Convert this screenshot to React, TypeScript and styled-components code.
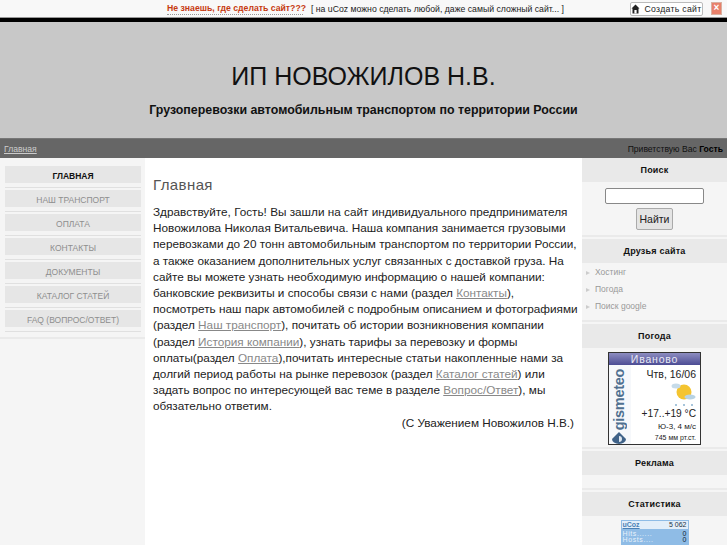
import React from "react";
import styled, { createGlobalStyle } from "styled-components";

const Global = createGlobalStyle`
  html, body { margin: 0; padding: 0; background: #fff; height: 545px; overflow: hidden; }
  body { font-family: "Liberation Sans", Arial, sans-serif; }
`;

const Page = styled.div`
  width: 727px;
  height: 545px;
  overflow: hidden;
  display: flex;
  flex-direction: column;
`;

const TopBar = styled.div`
  height: 17px;
  flex: none;
  background: #f8f8f8;
  display: flex;
  align-items: center;
`;

const TopRule = styled.div`
  height: 5px;
  flex: none;
  background: #000;
  border-top: 1px solid #999;
  box-sizing: border-box;
`;

const Promo = styled.a`
  margin-left: 167px;
  color: #c63a10;
  font-weight: bold;
  font-size: 8.7px;
  border-bottom: 1px dotted #999;
  line-height: 12px;
  width: 136px;
  white-space: nowrap;
`;

const Slogan = styled.span`
  margin-left: 8px;
  color: #222;
  font-size: 8.7px;
  width: 256px;
  white-space: nowrap;
`;

const CreateButton = styled.a`
  margin-left: 63px;
  width: 71px;
  height: 12px;
  background: #fff;
  border: 1px solid #bbb;
  border-radius: 2px;
  display: flex;
  align-items: center;
  justify-content: center;
  gap: 4px;
  color: #222;
  font-size: 8.7px;
  letter-spacing: 0.3px;
`;

const CloseBox = styled.span`
  margin-left: 8px;
  width: 9px;
  height: 11px;
  background: #e8806a;
  border: 1px solid #d9b0a0;
  color: #fff;
  font-size: 10px;
  line-height: 10px;
  text-align: center;
  font-weight: bold;
`;

const Header = styled.header`
  height: 116px;
  flex: none;
  background: #c8c8c8;
  display: flex;
  flex-direction: column;
  align-items: center;
  box-sizing: border-box;
  padding-top: 39px;
  color: #111;
`;

const SiteTitle = styled.h1`
  margin: 0;
  font-size: 25px;
  line-height: 30px;
  font-weight: normal;
`;

const SiteSub = styled.div`
  margin-top: 10px;
  font-size: 12.4px;
  line-height: 18px;
  font-weight: bold;
`;

const NavBar = styled.div`
  height: 20px;
  flex: none;
  background: #666;
  border-top: 1px solid #777;
  box-sizing: border-box;
  padding: 0 4px;
  display: flex;
  align-items: center;
  justify-content: space-between;
  font-size: 8.6px;
`;

const Crumb = styled.a`
  color: #ccc;
  text-decoration: underline;
`;

const Greeting = styled.span`
  color: #111;
  b { color: #000; }
`;

const Columns = styled.div`
  flex: 1;
  display: flex;
  min-height: 0;
`;

const LeftCol = styled.aside`
  width: 145px;
  flex: none;
  background: #f5f5f5;
`;

const MenuBlock = styled.nav`
  padding: 8px 4px 5px 5px;
  display: flex;
  flex-direction: column;
  gap: 2px;
  border-bottom: 2px solid #eaeaea;
`;

const MenuItem = styled.a<{ $active?: boolean }>`
  display: block;
  height: 21px;
  background: linear-gradient(#e6e6e6 0, #e6e6e6 17px, #f4f4f4 17px, #f4f4f4 100%);
  border-bottom: 1px solid #e0e0e0;
  text-align: center;
  font-size: 8.5px;
  line-height: 21px;
  color: ${(p) => (p.$active ? "#111" : "#8e8e8e")};
  font-weight: ${(p) => (p.$active ? "bold" : "normal")};
`;

const Main = styled.main`
  flex: 1;
  min-width: 0;
  background: #fff;
  padding: 17px 8px 0;
  color: #222;
`;

const PageTitle = styled.h2`
  margin: 0 0 9px;
  font-size: 15px;
  line-height: 20px;
  font-weight: normal;
  color: #555;
  letter-spacing: 0.4px;
`;

const Body = styled.div`
  font-size: 11.75px;
  line-height: 16.2px;
  white-space: nowrap;
  a { color: #888; text-decoration: underline; }
`;

const Signature = styled.div`
  text-align: right;
`;

const RightCol = styled.aside`
  width: 145px;
  flex: none;
  background: #f5f5f5;
  display: flex;
  flex-direction: column;
`;

const BlockTitle = styled.div`
  height: 24px;
  flex: none;
  background: #e9e9e9;
  display: flex;
  align-items: center;
  justify-content: center;
  font-size: 9px;
  font-weight: bold;
  color: #111;
  letter-spacing: 0.2px;
`;

const BlockBody = styled.div<{ $h: number }>`
  height: ${(p) => p.$h}px;
  flex: none;
  border-bottom: 2px solid #eaeaea;
  margin-bottom: 2px;
  display: flex;
  flex-direction: column;
  align-items: center;
`;

const SearchInput = styled.input`
  box-sizing: border-box;
  width: 99px;
  height: 16px;
  margin-top: 6px;
  border: 1px solid #888;
  border-radius: 2px;
  background: #fff;
`;

const SearchButton = styled.button`
  width: 37px;
  height: 22px;
  margin-top: 4px;
  padding: 0;
  background: #e4e4e4;
  border: 1px solid #aaa;
  border-radius: 2px;
  font: 10.5px "Liberation Sans", sans-serif;
  color: #222;
`;

const LinkList = styled.ul`
  list-style: none;
  margin: 0;
  padding: 1px 0 0 4px;
  width: 100%;
  box-sizing: border-box;
`;

const LinkRow = styled.li`
  height: 17px;
  font-size: 8.5px;
  line-height: 17px;
  color: #999;
  display: flex;
  align-items: center;
  gap: 5px;
  &::before {
    content: "";
    border-left: 4px solid #ccc;
    border-top: 2px solid transparent;
    border-bottom: 2px solid transparent;
  }
`;

const Informer = styled.div`
  width: 91px;
  height: 91px;
  margin-top: 4px;
  border: 1px solid #333;
  background: #fff;
  display: flex;
  flex-direction: column;
`;

const InformerHead = styled.div`
  height: 12px;
  flex: none;
  background: linear-gradient(#8d8dc0, #4c4c94);
  color: #e8e8f4;
  font-size: 10.5px;
  line-height: 12px;
  text-align: center;
  letter-spacing: 0.8px;
`;

const InformerBody = styled.div`
  flex: 1;
  display: flex;
  min-height: 0;
`;

const Brand = styled.div`
  width: 22px;
  flex: none;
  background: #f6f8fb;
  position: relative;
`;

const BrandMark = styled.svg`
  position: absolute;
  left: 2px;
  bottom: 0;
`;

const BrandText = styled.span`
  position: absolute;
  left: 5px;
  bottom: 14px;
  writing-mode: vertical-rl;
  transform: rotate(180deg);
  font-size: 14.5px;
  font-weight: bold;
  line-height: 11px;
  color: #4f7090;
  letter-spacing: -0.3px;
`;

const Forecast = styled.div`
  flex: 1;
  display: flex;
  flex-direction: column;
  align-items: flex-end;
  padding-right: 4px;
  color: #222;
`;

const FDate = styled.div`
  font-size: 10.5px;
  line-height: 12px;
  margin-top: 3px;
`;

const WeatherIcon = styled.svg`
  display: block;
  margin: 2px 0 0 0;
`;

const Temp = styled.div`
  font-size: 10.2px;
  line-height: 12px;
  white-space: nowrap;
`;

const Wind = styled.div`
  font-size: 8px;
  line-height: 11px;
  margin-top: 1px;
`;

const Pressure = styled.div`
  font-size: 7px;
  line-height: 11px;
`;

const Counter = styled.div`
  width: 68px;
  height: 25px;
  background: #8fbce6;
  margin-top: 4px;
  padding: 1px;
  box-sizing: border-box;
  font-size: 7px;
  line-height: 8px;
  display: flex;
  flex-direction: column;
`;

const CounterTop = styled.div`
  height: 8px;
  background: #e3eef9;
  display: flex;
  justify-content: space-between;
  padding: 0 1px;
  color: #234;
  margin-bottom: 1px;
  u { color: #4a80b5; font-weight: bold; }
`;

const CounterRow = styled.div`
  height: 6px;
  line-height: 7px;
  display: flex;
  justify-content: space-between;
  padding: 0 1px;
  color: #e8f2fb;
  letter-spacing: 0.6px;
  b { color: #123; letter-spacing: 0; font-weight: normal; }
`;

const links = ["Хостинг", "Погода", "Поиск google"];
const menu = ["ГЛАВНАЯ", "НАШ ТРАНСПОРТ", "ОПЛАТА", "КОНТАКТЫ", "ДОКУМЕНТЫ", "КАТАЛОГ СТАТЕЙ", "FAQ (ВОПРОС/ОТВЕТ)"];

export default function App() {
  return (
    <Page>
      <Global />
      <TopBar>
        <Promo>Не знаешь, где сделать сайт???</Promo>
        <Slogan>[ на uCoz можно сделать любой, даже самый сложный сайт... ]</Slogan>
        <CreateButton>
          <svg width="9" height="10" viewBox="0 0 9 10">
            <path d="M4.5 0.5 L8.5 4.5 H7.5 V9.5 H1.5 V4.5 H0.5 Z" fill="#222" />
            <rect x="3.4" y="6" width="2.2" height="3.5" fill="#fff" />
          </svg>
          Создать сайт
        </CreateButton>
        <CloseBox>×</CloseBox>
      </TopBar>
      <TopRule />
      <Header>
        <SiteTitle>ИП НОВОЖИЛОВ Н.В.</SiteTitle>
        <SiteSub>Грузоперевозки автомобильным транспортом по территории России</SiteSub>
      </Header>
      <NavBar>
        <Crumb>Главная</Crumb>
        <Greeting>Приветствую Вас <b>Гость</b></Greeting>
      </NavBar>
      <Columns>
        <LeftCol>
          <MenuBlock>
            {menu.map((m, i) => (
              <MenuItem key={m} $active={i === 0}>{m}</MenuItem>
            ))}
          </MenuBlock>
        </LeftCol>
        <Main>
          <PageTitle>Главная</PageTitle>
          <Body>
            Здравствуйте, Гость! Вы зашли на сайт индивидуального предпринимателя<br />
            Новожилова Николая Витальевича. Наша компания занимается грузовыми<br />
            перевозками до 20 тонн автомобильным транспортом по территории России,<br />
            а также оказанием дополнительных услуг связанных с доставкой груза. На<br />
            сайте вы можете узнать необходимую информацию о нашей компании:<br />
            банковские реквизиты и способы связи с нами (раздел <a>Контакты</a>),<br />
            посмотреть наш парк автомобилей с подробным описанием и фотографиями<br />
            (раздел <a>Наш транспорт</a>), почитать об истории возникновения компании<br />
            (раздел <a>История компании</a>), узнать тарифы за перевозку и формы<br />
            оплаты(раздел <a>Оплата</a>),почитать интересные статьи накопленные нами за<br />
            долгий период работы на рынке перевозок (раздел <a>Каталог статей</a>) или<br />
            задать вопрос по интересующей вас теме в разделе <a>Вопрос/Ответ</a>), мы<br />
            обязательно ответим.
            <Signature>(С Уважением Новожилов Н.В.)</Signature>
          </Body>
        </Main>
        <RightCol>
          <BlockTitle>Поиск</BlockTitle>
          <BlockBody $h={53}>
            <SearchInput />
            <SearchButton>Найти</SearchButton>
          </BlockBody>
          <BlockTitle>Друзья сайта</BlockTitle>
          <BlockBody $h={57}>
            <LinkList>
              {links.map((l) => <LinkRow key={l}>{l}</LinkRow>)}
            </LinkList>
          </BlockBody>
          <BlockTitle>Погода</BlockTitle>
          <BlockBody $h={99}>
            <Informer>
              <InformerHead>Иваново</InformerHead>
              <InformerBody>
                <Brand>
                  <BrandText>gismeteo</BrandText>
                  <BrandMark width="16" height="12" viewBox="0 0 16 12">
                    <path d="M8 0 L15 7 A7 5 0 0 1 1 7 Z" fill="#3f6288" />
                    <path d="M8 4a3 3 0 0 1 0 6z" fill="#dfe7f0" />
                  </BrandMark>
                </Brand>
                <Forecast>
                  <FDate>Чтв, 16/06</FDate>
                  <WeatherIcon width="26" height="26" viewBox="0 0 26 26">
                    <circle cx="14" cy="10" r="7.5" fill="#f4c430" />
                    <ellipse cx="6" cy="4" rx="4.5" ry="2.5" fill="#c6dbe9" />
                    <ellipse cx="20" cy="15" rx="5.5" ry="2.5" fill="#b8d3e4" />
                    <circle cx="6" cy="23" r="1" fill="#8ab2cf" />
                    <circle cx="14" cy="23" r="1" fill="#8ab2cf" />
                    <circle cx="22" cy="23" r="1" fill="#8ab2cf" />
                  </WeatherIcon>
                  <Temp>+17..+19 °C</Temp>
                  <Wind>Ю-3, 4 м/с</Wind>
                  <Pressure>745 мм рт.ст.</Pressure>
                </Forecast>
              </InformerBody>
            </Informer>
          </BlockBody>
          <BlockTitle>Реклама</BlockTitle>
          <BlockBody $h={13} />
          <BlockTitle>Статистика</BlockTitle>
          <BlockBody $h={40}>
            <Counter>
              <CounterTop><u>uCoz</u><span>5 062</span></CounterTop>
              <CounterRow>Hits......<b>0</b></CounterRow>
              <CounterRow>Hosts....<b>0</b></CounterRow>
            </Counter>
          </BlockBody>
        </RightCol>
      </Columns>
    </Page>
  );
}
